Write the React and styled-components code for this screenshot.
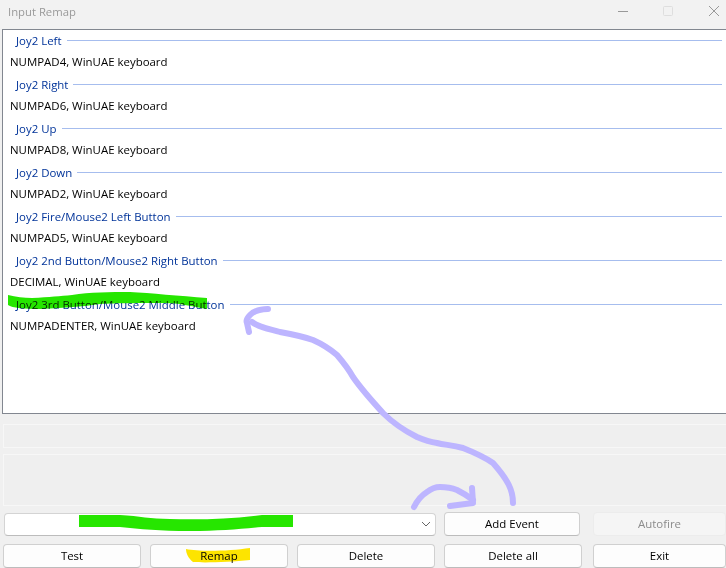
import React from "react";
import styled, { createGlobalStyle } from "styled-components";

const GlobalStyle = createGlobalStyle`
  html, body {
    margin: 0;
    padding: 0;
    background: #f0f0f0;
    font-family: "Open Sans", "Liberation Sans", sans-serif;
    font-size: 11.45px;
    overflow: hidden;
  }
`;

const Window = styled.div`
  position: relative;
  width: 726px;
  height: 568px;
  overflow: hidden;
  display: flex;
  flex-direction: column;
  background: #f0f0f0;
`;

const TitleBar = styled.div`
  height: 29px;
  flex: none;
  background: #f2f2f2;
  display: flex;
  align-items: flex-start;
  justify-content: space-between;
  padding-left: 8px;
  box-sizing: border-box;
  color: #9a9a9a;
  font-size: 11.3px;
`;

const TitleText = styled.span`
  line-height: 23px;
`;

const WindowControls = styled.div`
  display: flex;
  align-items: flex-start;
`;

const ControlIcon = styled.svg`
  display: block;
  width: 46px;
  height: 23px;
  margin-right: ${({ $gap }) => $gap || 0}px;
`;

const ListBox = styled.div`
  height: 385px;
  flex: none;
  margin-left: 2px;
  background: #fff;
  border: 1px solid #828790;
  border-right: none;
  box-sizing: border-box;
`;

const Group = styled.div`
  display: flex;
  align-items: center;
  height: 21px;
  padding-left: 13px;
  padding-right: 4px;
  gap: 5px;
  color: #003399;
  white-space: nowrap;
`;

const GroupLine = styled.div`
  flex: 1;
  height: 1px;
  background: #a6bdee;
`;

const Item = styled.div`
  height: 23px;
  box-sizing: border-box;
  padding-bottom: 3px;
  display: flex;
  align-items: center;
  padding-left: 7px;
  color: #000;
  white-space: nowrap;
`;

const Panel = styled.div`
  height: ${({ $height }) => $height}px;
  margin: ${({ $top }) => $top}px 0 0 3px;
  flex: none;
  border: 1px solid #f7f7f7;
  border-right: none;
  box-sizing: border-box;
  background: #efefef;
`;

const ControlRow = styled.div`
  display: flex;
  align-items: stretch;
  height: 24px;
  flex: none;
  margin-top: ${({ $top }) => $top}px;
  padding-left: ${({ $left }) => $left}px;
`;

const Button = styled.div`
  box-sizing: border-box;
  width: ${({ $width }) => $width}px;
  margin-right: ${({ $gap }) => $gap || 0}px;
  padding-bottom: 1px;
  flex: none;
  display: flex;
  align-items: center;
  justify-content: center;
  background: ${({ $disabled }) => ($disabled ? "#f5f5f5" : "#fdfdfd")};
  border: 1px solid ${({ $disabled }) => ($disabled ? "#ececec" : "#d0d0d0")};
  border-bottom-color: ${({ $disabled }) => ($disabled ? "#ececec" : "#bcbcbc")};
  border-radius: 4px;
  color: ${({ $disabled }) => ($disabled ? "#8c8c8c" : "#000")};
`;

const Combo = styled.div`
  box-sizing: border-box;
  width: 432px;
  margin: 1px 8px 0 0;
  flex: none;
  display: flex;
  align-items: center;
  justify-content: flex-end;
  padding-right: 4px;
  background: #fff;
  border: 1px solid #d4d4d4;
  border-bottom-color: #bcbcbc;
  border-radius: 4px;
`;

// marker strokes drawn over the screenshot
const Annotations = styled.svg`
  position: absolute;
  left: 0;
  top: 0;
  width: 726px;
  height: 568px;
  pointer-events: none;
`;

const Marker = styled.path`
  fill: ${({ $color }) => $color};
  mix-blend-mode: multiply;
`;

const Pen = styled.path`
  fill: none;
  stroke: #bdb5ff;
  stroke-width: 6;
  stroke-linecap: round;
  stroke-linejoin: round;
`;

const rows = [
  ["Joy2 Left", "NUMPAD4, WinUAE keyboard"],
  ["Joy2 Right", "NUMPAD6, WinUAE keyboard"],
  ["Joy2 Up", "NUMPAD8, WinUAE keyboard"],
  ["Joy2 Down", "NUMPAD2, WinUAE keyboard"],
  ["Joy2 Fire/Mouse2 Left Button", "NUMPAD5, WinUAE keyboard"],
  ["Joy2 2nd Button/Mouse2 Right Button", "DECIMAL, WinUAE keyboard"],
  ["Joy2 3rd Button/Mouse2 Middle Button", "NUMPADENTER, WinUAE keyboard"],
];

export default function App() {
  return (
    <Window>
      <GlobalStyle />
      <TitleBar>
        <TitleText>Input Remap</TitleText>
        <WindowControls>
          <ControlIcon viewBox="0 0 46 23">
            <path d="M29 11.5h10" stroke="#999" strokeWidth="1" />
          </ControlIcon>
          <ControlIcon viewBox="0 0 46 23">
            <rect x="28.5" y="6.5" width="9" height="9" rx="1" fill="none" stroke="#dedede" />
          </ControlIcon>
          <ControlIcon viewBox="0 0 46 23" $gap={-1}>
            <path d="M28 6l10 10M38 6l-10 10" stroke="#999" strokeWidth="1" />
          </ControlIcon>
        </WindowControls>
      </TitleBar>

      <ListBox>
        {rows.map(([group, item]) => (
          <React.Fragment key={group}>
            <Group>
              {group}
              <GroupLine />
            </Group>
            <Item>{item}</Item>
          </React.Fragment>
        ))}
      </ListBox>

      <Panel $top={10} $height={24} />
      <Panel $top={6} $height={52} />

      <ControlRow $top={6} $left={4}>
        <Combo>
          <svg width="10" height="7" viewBox="0 0 10 7">
            <path d="M1 1l4 4 4-4" fill="none" stroke="#666" strokeWidth="1" />
          </svg>
        </Combo>
        <Button $width={136} $gap={13}>Add Event</Button>
        <Button $width={133} $disabled>Autofire</Button>
      </ControlRow>

      <ControlRow $top={8} $left={3}>
        <Button $width={138} $gap={9}>Test</Button>
        <Button $width={138} $gap={9}>Remap</Button>
        <Button $width={138} $gap={9}>Delete</Button>
        <Button $width={138} $gap={11}>Delete all</Button>
        <Button $width={133}>Exit</Button>
      </ControlRow>

      <Annotations viewBox="0 0 726 568">
        {/* green highlight over the 3rd button label */}
        <Marker
          $color="#26e600"
          d="M8 295 C 16 297 24 298 32 298 C 50 297 60 296 72 295 C 90 292 110 292 130 292 C 150 293 180 296 207 298 L207 309 C 190 306 178 303 165 303 C 150 303 115 303 100 304 C 80 307 60 308 40 309 C 25 309 12 308 8 305 Z"
        />
        {/* green highlight over the combo text */}
        <Marker
          $color="#26e600"
          d="M79 515 H120 C 140 516 150 519 170 519 C 200 520 230 519 262 515 H293 V527 H262 C 240 529 220 531 190 531 C 160 531 140 529 120 527 H79 Z"
        />
        {/* yellow highlight behind Remap */}
        <Marker
          $color="#ffe600"
          d="M186 549 C 200 552 230 551 250 548 V560 C 230 562 205 563 193 562 C 188 558 186 553 186 549 Z"
        />
        {/* big arrow from Add Event up to the list */}
        <Pen d="M513 503 C 513 490 508 480 493 463 C 483 456 473 452 463 448 C 452 445 445 445 437 443 C 430 442 424 440 417 437 C 405 431 394 424 383 413 C 372 401 362 390 353 377 C 348 368 343 362 337 355 C 330 349 322 344 313 340 C 302 336 291 334 280 332 C 270 329 260 328 252 322" />
        <Pen d="M268 309 C 260 309 254 311 250 315 C 247 318 246 321 247 323 L 249 332" />
        {/* small arrow towards Add Event */}
        <Pen d="M414 507 C 418 499 422 495 427 492 C 432 488 436 487 440 487 C 447 487 452 488 457 490 C 463 493 468 496 473 500" />
        <Pen d="M472 488 L 473 503 L 450 506" />
      </Annotations>
    </Window>
  );
}
